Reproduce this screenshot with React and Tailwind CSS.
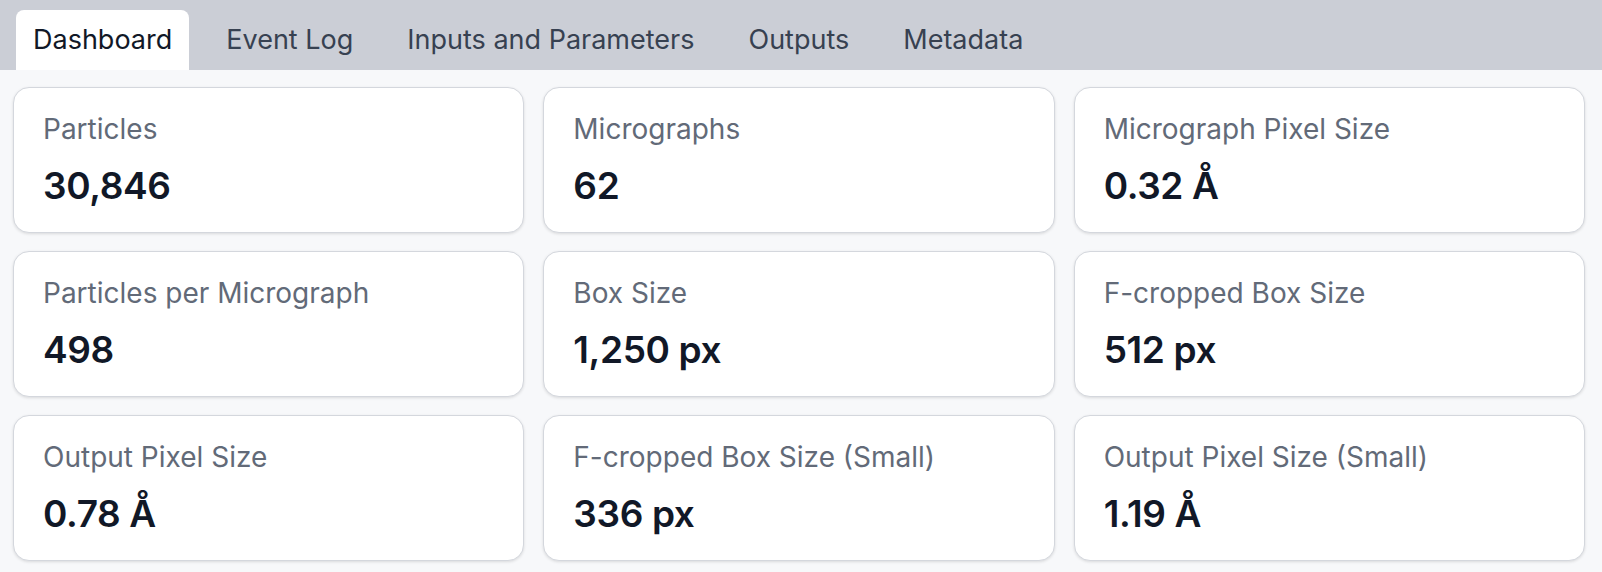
import React, { useState } from "react";

const tabs = ["Dashboard", "Event Log", "Inputs and Parameters", "Outputs", "Metadata"];

const stats = [
  { label: "Particles", value: "30,846" },
  { label: "Micrographs", value: "62" },
  { label: "Micrograph Pixel Size", value: "0.32 Å" },
  { label: "Particles per Micrograph", value: "498" },
  { label: "Box Size", value: "1,250 px" },
  { label: "F-cropped Box Size", value: "512 px" },
  { label: "Output Pixel Size", value: "0.78 Å" },
  { label: "F-cropped Box Size (Small)", value: "336 px" },
  { label: "Output Pixel Size (Small)", value: "1.19 Å" },
];

export default function App() {
  const [active, setActive] = useState("Dashboard");

  return (
    <div className="w-full min-h-[572px] bg-[#f7f8fa] font-['Inter','Liberation_Sans',sans-serif]">
      {/* Tabs */}
      <div className="h-[70px] bg-[#cbced6] flex items-end gap-[20px] pl-4">
        {tabs.map(t => (
          <button
            key={t}
            onClick={() => setActive(t)}
            className={
              "h-[60px] px-[17px] flex items-center text-[27px] leading-[40px] rounded-t-lg " +
              (active === t ? "bg-white text-[#111827]" : "text-[#374151]")
            }
          >
            {t}
          </button>
        ))}
      </div>

      {/* Stat cards */}
      <div className="grid grid-cols-3 gap-x-[19px] gap-y-[18px] pl-[13px] pr-[17px] pt-[17px] pb-[11px]">
        {stats.map(s => (
          <div
            key={s.label}
            className="h-[146px] bg-white border border-[#d4d7dd] rounded-2xl shadow-[0_1px_3px_rgba(0,0,0,0.12)] px-[29px] pt-[21px] flex flex-col"
          >
            <div className="text-[28px] leading-[40px] text-[#626a78]">{s.label}</div>
            <div className="mt-[17px] text-[37px] leading-[40px] font-semibold text-[#111827] tracking-[-0.01em]">
              {s.value}
            </div>
          </div>
        ))}
      </div>
    </div>
  );
}
